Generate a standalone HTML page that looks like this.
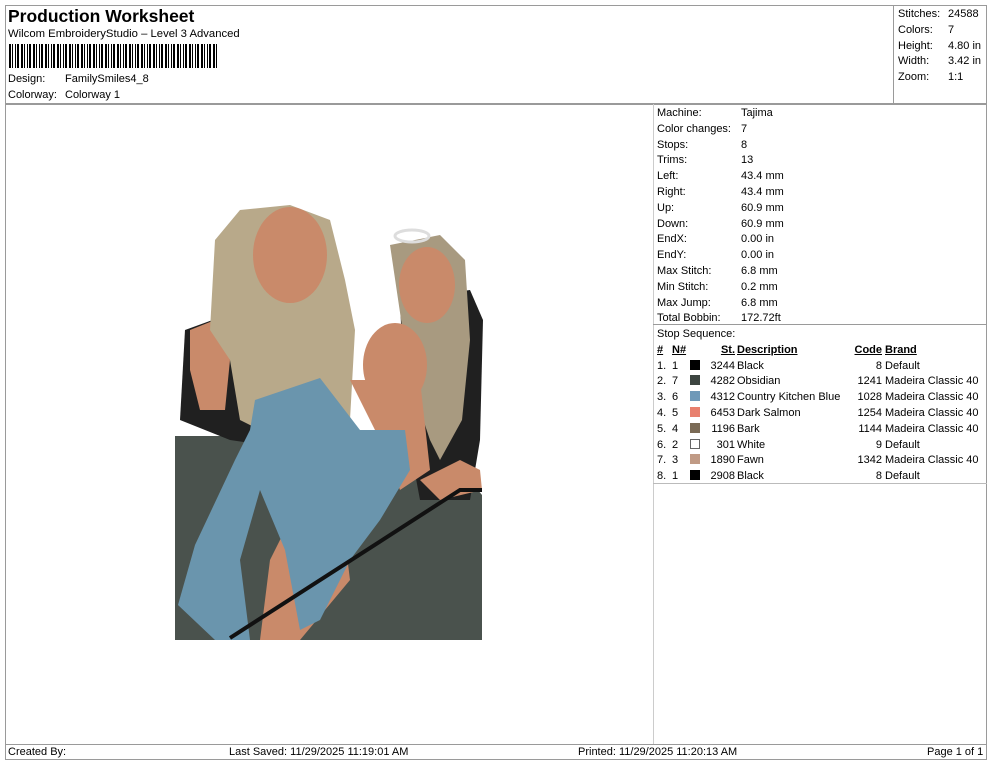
<!DOCTYPE html>
<html><head><meta charset="utf-8"><style>
*{margin:0;padding:0;box-sizing:border-box}
body{width:990px;height:762px;background:#fff;font-family:"Liberation Sans",Arial,sans-serif;color:#000;position:relative;overflow:hidden;font-size:11px}
.a{position:absolute;white-space:nowrap}
.ln{position:absolute;background:#9a9a9a}
table{border-collapse:collapse}
td{padding:0;height:15.8px;white-space:nowrap;font-size:11px}
.sw{display:inline-block;width:10px;height:10px;vertical-align:-1px}
</style></head><body>
<div class="ln" style="left:5px;top:5px;width:982px;height:1px"></div>
<div class="ln" style="left:5px;top:5px;width:1px;height:755px"></div>
<div class="ln" style="left:986px;top:5px;width:1px;height:755px"></div>
<div class="ln" style="left:5px;top:103px;width:982px;height:2px"></div>
<div class="ln" style="left:893px;top:5px;width:1px;height:99px"></div>
<div class="ln" style="left:653px;top:104px;width:1px;height:640px;background:#ccc"></div>
<div class="ln" style="left:653px;top:324px;width:334px;height:1px"></div>
<div class="ln" style="left:653px;top:483px;width:334px;height:1px;background:#bbb"></div>
<div class="ln" style="left:5px;top:744px;width:982px;height:1px"></div>
<div class="ln" style="left:5px;top:759px;width:982px;height:1px"></div>

<div class="a" style="left:8px;top:6px;font-size:17.5px;font-weight:bold">Production Worksheet</div>
<div class="a" style="left:8px;top:28px;font-size:11.3px">Wilcom EmbroideryStudio – Level 3 Advanced</div>
<div class="a" style="left:9px;top:44px;width:210px;height:24px;background:repeating-linear-gradient(90deg,#000 0 2px,#fff 2px 3px,#000 3px 4px,#fff 4px 6px,#000 6px 7px,#fff 7px 8px,#000 8px 10px,#fff 10px 12px)"></div>
<div class="a" style="left:8px;top:73px">Design:</div><div class="a" style="left:65px;top:73px">FamilySmiles4_8</div>
<div class="a" style="left:8px;top:89px">Colorway:</div><div class="a" style="left:65px;top:89px">Colorway 1</div>

<div class="a" style="left:898px;top:7px;line-height:15.8px">Stitches:<br>Colors:<br>Height:<br>Width:<br>Zoom:</div>
<div class="a" style="left:948px;top:7px;line-height:15.8px">24588<br>7<br>4.80 in<br>3.42 in<br>1:1</div>

<div class="a" style="left:657px;top:106px;line-height:15.8px">Machine:<br>Color changes:<br>Stops:<br>Trims:<br>Left:<br>Right:<br>Up:<br>Down:<br>EndX:<br>EndY:<br>Max Stitch:<br>Min Stitch:<br>Max Jump:<br>Total Bobbin:<br>Stop Sequence:</div>
<div class="a" style="left:741px;top:106px;line-height:15.8px">Tajima<br>7<br>8<br>13<br>43.4 mm<br>43.4 mm<br>60.9 mm<br>60.9 mm<br>0.00 in<br>0.00 in<br>6.8 mm<br>0.2 mm<br>6.8 mm<br>172.72ft</div>

<table class="a" style="left:657px;top:342px">
<tr style="font-weight:bold"><td style="width:15px"><u>#</u></td><td style="width:18px"><u>N#</u></td><td style="width:14px"></td><td style="width:31px;text-align:right"><u>St.</u></td><td style="width:115px;padding-left:2px"><u>Description</u></td><td style="width:32px;text-align:right"><u>Code</u></td><td style="padding-left:3px"><u>Brand</u></td></tr>
<tr><td>1.</td><td>1</td><td><span class="sw" style="background:#000"></span></td><td align="right">3244</td><td style="padding-left:2px">Black</td><td align="right">8</td><td style="padding-left:3px">Default</td></tr>
<tr><td>2.</td><td>7</td><td><span class="sw" style="background:#3c4540"></span></td><td align="right">4282</td><td style="padding-left:2px">Obsidian</td><td align="right">1241</td><td style="padding-left:3px">Madeira Classic 40</td></tr>
<tr><td>3.</td><td>6</td><td><span class="sw" style="background:#6f99b8"></span></td><td align="right">4312</td><td style="padding-left:2px">Country Kitchen Blue</td><td align="right">1028</td><td style="padding-left:3px">Madeira Classic 40</td></tr>
<tr><td>4.</td><td>5</td><td><span class="sw" style="background:#e8806e"></span></td><td align="right">6453</td><td style="padding-left:2px">Dark Salmon</td><td align="right">1254</td><td style="padding-left:3px">Madeira Classic 40</td></tr>
<tr><td>5.</td><td>4</td><td><span class="sw" style="background:#7a6a55"></span></td><td align="right">1196</td><td style="padding-left:2px">Bark</td><td align="right">1144</td><td style="padding-left:3px">Madeira Classic 40</td></tr>
<tr><td>6.</td><td>2</td><td><span class="sw" style="background:#fff;border:1px solid #666"></span></td><td align="right">301</td><td style="padding-left:2px">White</td><td align="right">9</td><td style="padding-left:3px">Default</td></tr>
<tr><td>7.</td><td>3</td><td><span class="sw" style="background:#c09a85"></span></td><td align="right">1890</td><td style="padding-left:2px">Fawn</td><td align="right">1342</td><td style="padding-left:3px">Madeira Classic 40</td></tr>
<tr><td>8.</td><td>1</td><td><span class="sw" style="background:#000"></span></td><td align="right">2908</td><td style="padding-left:2px">Black</td><td align="right">8</td><td style="padding-left:3px">Default</td></tr>
</table>

<svg class="a" style="left:0;top:0" width="990" height="762">
<polygon points="175,436 290,436 300,470 470,480 482,495 482,640 175,640" fill="#4a524d"/>
<polygon points="185,330 240,310 345,320 350,440 300,450 230,440 180,420" fill="#202020"/>
<polygon points="400,300 470,290 483,320 480,440 470,500 420,500 405,420" fill="#202020"/>
<polygon points="190,330 215,320 230,360 225,410 200,410 190,370" fill="#c98a6a"/>
<polygon points="255,290 330,290 345,380 300,440 250,420" fill="#c98a6a"/>
<polygon points="215,240 240,210 290,205 330,220 345,280 355,330 350,420 330,470 300,440 260,430 240,420 230,360 210,330" fill="#b8a98a"/>
<ellipse cx="290" cy="255" rx="37" ry="48" fill="#c98a6a"/>
<polygon points="390,245 440,235 465,260 470,340 462,420 440,460 430,440 410,380" fill="#a89a80"/>
<ellipse cx="427" cy="285" rx="28" ry="38" fill="#c98a6a"/>
<ellipse cx="412" cy="236" rx="17" ry="6" fill="none" stroke="#ddd" stroke-width="3"/>
<polygon points="420,480 460,460 480,470 482,490 440,500" fill="#c98a6a"/>
<polygon points="350,380 420,380 430,470 400,490 380,440" fill="#c98a6a"/>
<ellipse cx="395" cy="365" rx="32" ry="42" fill="#c98a6a"/>
<polygon points="290,520 340,500 350,580 300,640 260,640 270,560" fill="#c98a6a"/>
<polygon points="255,400 320,378 360,430 405,430 410,470 380,520 350,560 320,620 300,630 285,550 260,490 240,560 250,640 215,640 178,605 195,545 235,460 250,430" fill="#6a95ad"/>
<polyline points="230,638 460,490 482,490" fill="none" stroke="#111" stroke-width="4"/>
</svg>

<div class="a" style="left:8px;top:746px">Created By:</div>
<div class="a" style="left:229px;top:746px">Last Saved: 11/29/2025 11:19:01 AM</div>
<div class="a" style="left:578px;top:746px">Printed: 11/29/2025 11:20:13 AM</div>
<div class="a" style="left:927px;top:746px">Page 1 of 1</div>
</body></html>
